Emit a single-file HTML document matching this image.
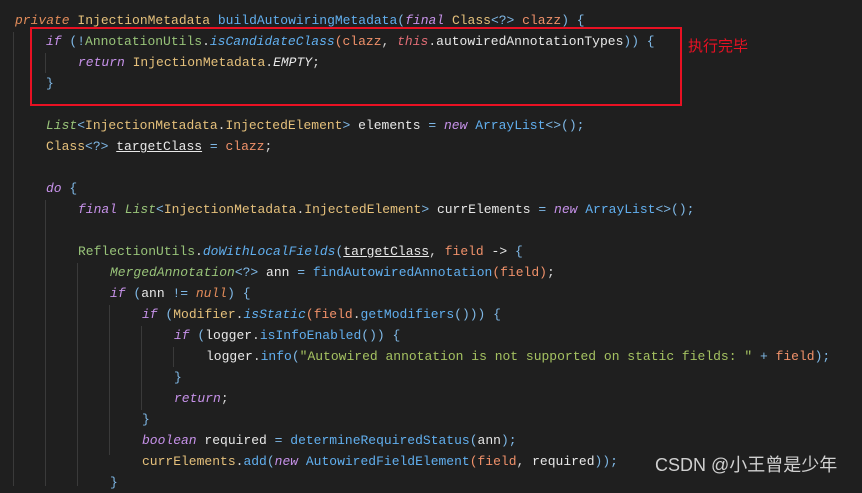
<!DOCTYPE html>
<html><head><meta charset="utf-8"><style>
body{margin:0;width:862px;height:486px;background:#1f1f1f;overflow:hidden;position:relative;font-family:"Liberation Mono",monospace;font-size:13px;color:#d4d4d4}
.l{position:absolute;white-space:pre;line-height:21px;height:21px}
.k{color:#c792ea;font-style:italic}
.p{color:#e38c5a;font-style:italic}
.t{color:#e5c07b}
.g{color:#98c379}
.gi{color:#98c379;font-style:italic}
.m{color:#61afef}
.mi{color:#61afef;font-style:italic}
.v{color:#f0916a}
.r{color:#e06c75;font-style:italic}
.w{color:#e8e8e8}
.u{text-decoration:underline}
.s{color:#a5c261}
.b{color:#7fb8e6}
.gd{position:absolute;width:1px;background:#3a3a3a}
</style></head><body>
<div class="gd" style="left:13px;top:32px;height:454px"></div>
<div class="gd" style="left:45px;top:200px;height:286px"></div>
<div class="gd" style="left:77px;top:263px;height:223px"></div>
<div class="gd" style="left:109px;top:305px;height:150px"></div>
<div class="gd" style="left:141px;top:326px;height:84px"></div>
<div class="gd" style="left:173px;top:347px;height:20px"></div>
<div class="gd" style="left:45px;top:53px;height:20px"></div>

<div class="l" style="left:15px;top:10px"><span class="p">private</span> <span class="t">InjectionMetadata</span> <span class="m">buildAutowiringMetadata</span><span class="b">(</span><span class="k">final</span> <span class="t">Class</span><span class="b">&lt;?&gt;</span> <span class="v">clazz</span><span class="b">) {</span></div>
<div class="l" style="left:46px;top:31px"><span class="k">if</span> <span class="b">(!</span><span class="g">AnnotationUtils</span>.<span class="mi">isCandidateClass</span><span class="v">(clazz</span>, <span class="r">this</span>.<span class="w">autowiredAnnotationTypes</span><span class="b">)) {</span></div>
<div class="l" style="left:78px;top:52px"><span class="k">return</span> <span class="t">InjectionMetadata</span>.<span class="w" style="font-style:italic">EMPTY</span>;</div>
<div class="l" style="left:46px;top:73px"><span class="b">}</span></div>
<div class="l" style="left:46px;top:115px"><span class="gi">List</span><span class="b">&lt;</span><span class="t">InjectionMetadata</span>.<span class="t">InjectedElement</span><span class="b">&gt;</span> <span class="w">elements</span> <span class="b">=</span> <span class="k">new</span> <span class="m">ArrayList</span><span class="b">&lt;&gt;();</span></div>
<div class="l" style="left:46px;top:136px"><span class="t">Class</span><span class="b">&lt;?&gt;</span> <span class="w u">targetClass</span> <span class="b">=</span> <span class="v">clazz</span>;</div>
<div class="l" style="left:46px;top:178px"><span class="k">do</span> <span class="b">{</span></div>
<div class="l" style="left:78px;top:199px"><span class="k">final</span> <span class="gi">List</span><span class="b">&lt;</span><span class="t">InjectionMetadata</span>.<span class="t">InjectedElement</span><span class="b">&gt;</span> <span class="w">currElements</span> <span class="b">=</span> <span class="k">new</span> <span class="m">ArrayList</span><span class="b">&lt;&gt;();</span></div>
<div class="l" style="left:78px;top:241px"><span class="g">ReflectionUtils</span>.<span class="mi">doWithLocalFields</span><span class="b">(</span><span class="w u">targetClass</span>, <span class="v">field</span> <span class="w">-&gt;</span> <span class="b">{</span></div>
<div class="l" style="left:110px;top:262px"><span class="gi">MergedAnnotation</span><span class="b">&lt;?&gt;</span> <span class="w">ann</span> <span class="b">=</span> <span class="m">findAutowiredAnnotation</span><span class="v">(field)</span>;</div>
<div class="l" style="left:110px;top:283px"><span class="k">if</span> <span class="b">(</span><span class="w">ann</span> <span class="b">!=</span> <span class="p">null</span><span class="b">) {</span></div>
<div class="l" style="left:142px;top:304px"><span class="k">if</span> <span class="b">(</span><span class="t">Modifier</span>.<span class="mi">isStatic</span><span class="v">(field</span>.<span class="m">getModifiers</span><span class="b">())) {</span></div>
<div class="l" style="left:174px;top:325px"><span class="k">if</span> <span class="b">(</span><span class="w">logger</span>.<span class="m">isInfoEnabled</span><span class="b">()) {</span></div>
<div class="l" style="left:206px;top:346px"><span class="w">logger</span>.<span class="m">info</span><span class="b">(</span><span class="s">"Autowired annotation is not supported on static fields: "</span> <span class="b">+</span> <span class="v">field</span><span class="b">);</span></div>
<div class="l" style="left:174px;top:367px"><span class="b">}</span></div>
<div class="l" style="left:174px;top:388px"><span class="k">return</span>;</div>
<div class="l" style="left:142px;top:409px"><span class="b">}</span></div>
<div class="l" style="left:142px;top:430px"><span class="k">boolean</span> <span class="w">required</span> <span class="b">=</span> <span class="m">determineRequiredStatus</span><span class="b">(</span><span class="w">ann</span><span class="b">);</span></div>
<div class="l" style="left:142px;top:451px"><span class="t">currElements</span>.<span class="m">add</span><span class="b">(</span><span class="k">new</span> <span class="m">AutowiredFieldElement</span><span class="v">(field</span>, <span class="w">required</span><span class="b">));</span></div>
<div class="l" style="left:110px;top:472px"><span class="b">}</span></div>

<div style="position:absolute;left:30px;top:27px;width:648px;height:75px;border:2px solid #e81123"></div>
<div style="position:absolute;left:688px;top:37px;color:#e81123;font-family:'Liberation Sans','Noto Sans CJK SC',sans-serif;font-size:15px;line-height:20px">执行完毕</div>
<div style="position:absolute;left:655px;top:454px;color:#d0d0d0;font-family:'Liberation Sans','Noto Sans CJK SC',sans-serif;font-size:18px;line-height:22px">CSDN @小王曾是少年</div>
</body></html>
